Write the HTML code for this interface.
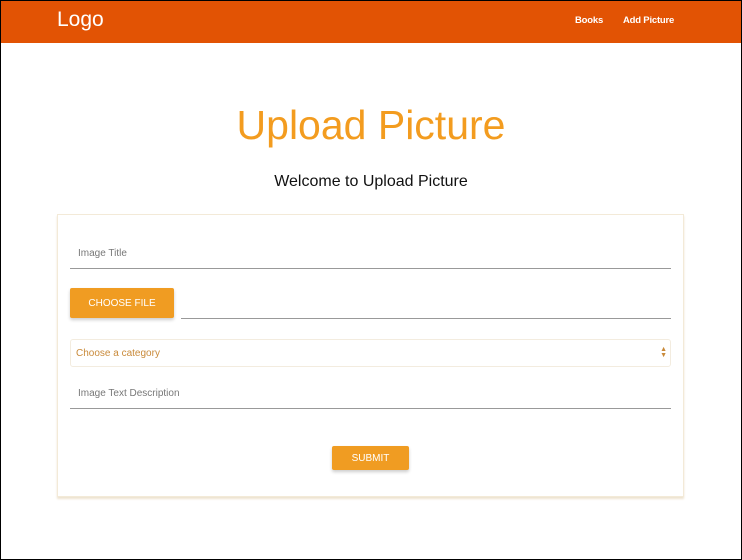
<!DOCTYPE html>
<html><head><meta charset="utf-8"><style>
*{box-sizing:border-box;margin:0;padding:0}
body{width:742px;height:560px;background:#fff;font-family:"Liberation Sans",sans-serif;position:relative;overflow:hidden}
.frame{position:absolute;left:0;top:0;width:742px;height:560px;border:1px solid #000;z-index:5;pointer-events:none}
.nav{position:absolute;left:0;top:0;width:742px;height:43px;background:#e25304}
.logo{position:absolute;left:57px;top:8px;color:#fff;font-size:21px}
.nl{position:absolute;top:15px;color:#fff;font-size:9.5px;font-weight:bold;letter-spacing:-0.2px}
h1{position:absolute;left:0;width:742px;top:102px;text-align:center;color:#f39c1f;font-size:41px;font-weight:normal}
.wel{position:absolute;left:0;width:742px;top:173px;text-align:center;font-size:16px;color:#111}
.card{position:absolute;left:57px;top:214px;width:627px;height:283px;border:1px solid #f3ead8;box-shadow:0 2px 2px #eee3d0}
.lab{position:absolute;font-size:10px;color:#777}
.line{position:absolute;height:1px;background:#999}
.btn{position:absolute;background:#f09c22;color:#fff;font-size:10px;text-align:center;box-shadow:0 2px 3px rgba(0,0,0,.2);border-radius:2px}
.sel{position:absolute;left:70px;top:339px;width:601px;height:28px;border:1px solid #f3ecdf;border-radius:3px}
</style></head><body>
<div class="frame"></div>
<div class="nav"><div class="logo">Logo</div><div class="nl" style="left:575px">Books</div><div class="nl" style="left:623px">Add Picture</div></div>
<h1>Upload Picture</h1>
<div class="wel">Welcome to Upload Picture</div>
<div class="card"></div>
<div class="lab" style="left:78px;top:248px">Image Title</div>
<div class="line" style="left:70px;top:268px;width:601px"></div>
<div class="btn" style="left:70px;top:288px;width:104px;height:30px;line-height:31px">CHOOSE FILE</div>
<div class="line" style="left:181px;top:318px;width:490px"></div>
<div class="sel"><span style="position:absolute;left:5px;top:8px;font-size:10px;color:#c98a3a">Choose a category</span><span style="position:absolute;right:3px;top:7px;font-size:7px;color:#c98a3a;line-height:6px">▲<br>▼</span></div>
<div class="lab" style="left:78px;top:388px">Image Text Description</div>
<div class="line" style="left:70px;top:408px;width:601px"></div>
<div class="btn" style="left:332px;top:446px;width:77px;height:24px;line-height:25px">SUBMIT</div>
</body></html>
